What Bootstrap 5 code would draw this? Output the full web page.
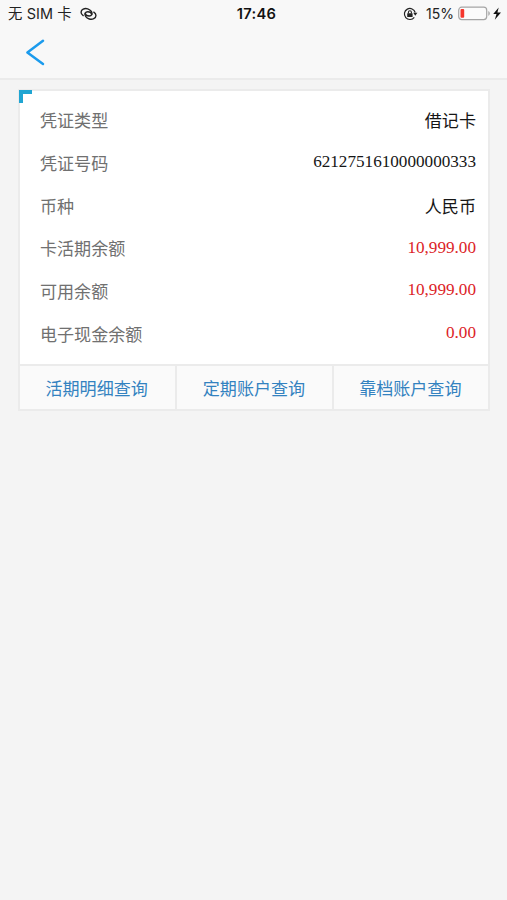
<!DOCTYPE html>
<html lang="zh-CN">
<head>
<meta charset="utf-8">
<meta name="viewport" content="width=device-width, initial-scale=1">
<title>账户余额</title>
<link href="https://cdn.jsdelivr.net/npm/bootstrap@5.3.0/dist/css/bootstrap.min.css" rel="stylesheet">
<style>
body{background:#f4f4f4;font-family:"Liberation Sans","Noto Sans CJK SC",sans-serif;color:#161616;font-size:17.07px;min-height:100vh;overflow:hidden}
.top-area{background:#f8f8f8;border-bottom:2px solid #ebebeb;height:80px}
.status-line{height:28px;font-family:Inter,"Noto Sans CJK SC",sans-serif;font-size:14px;line-height:28px;color:#222;padding:0 5px 0 8px}
.status-line>div{flex:1 1 0}
.status-line svg{flex:none}
.carrier{font-size:14.4px;letter-spacing:.12px}
.clock{font-weight:600;font-size:14.7px;letter-spacing:.25px;color:#111;padding-left:3px}
.back-link{margin:10px 0 0 24px;line-height:0;width:22px}
.account{margin:9px 17px 0 18px;border:2px solid #ebebeb;border-radius:0;background:#fff}
.corner-tab{top:-1px;left:-1px;width:13px;height:13px;border:solid #20a5d2;border-width:4px 0 0 4px}
.detail-list{padding:9.6px 12px 7.4px 20px}
.detail-list>div{height:42.7px}
.detail-list dt{color:#707070;font-weight:400}
.figure-text{font-family:"Liberation Serif",serif;font-size:17.15px;position:relative;top:-2.5px}
.money{color:#dc2327}
.actions{border-top:2px solid #ebebeb;background:#fafafa;height:45px}
.actions a{color:#3382c0;padding:4px 2px 0 0}
.actions a+a{border-left:2px solid #ebebeb;padding-right:1px}
</style>
<script src="https://cdn.jsdelivr.net/npm/bootstrap@5.3.0/dist/js/bootstrap.bundle.min.js"></script>
</head>
<body>
<header class="top-area">
  <div class="status-line d-flex align-items-center">
    <div class="d-flex align-items-center"><span class="carrier">无 SIM 卡</span>
      <svg class="ms-2" width="17" height="14" viewBox="0 0 17 14" fill="none" stroke="#222" stroke-width="1.4" stroke-linecap="round"><path d="M3.2 8.6C.4 6.9.3 3.6 3.2 2.1 6 .7 9.7 1.9 11.4 4.5c1.5 2.4.2 4.5-2.2 4.5-2 0-3.6-1.1-4-2.5"/><path d="M13.8 5.2c2.8 1.7 2.9 5 0 6.5-2.8 1.4-6.5.2-8.2-2.4-1.5-2.4-.2-4.5 2.2-4.5 2 0 3.6 1.1 4 2.5"/></svg>
    </div>
    <span class="clock">17:46</span>
    <div class="d-flex align-items-center justify-content-end">
      <svg class="me-2" width="15" height="14" viewBox="0 0 15 14"><path d="M11.3 10.3A5.5 5.5 0 1 1 12.2 5.5" fill="none" stroke="#222" stroke-width="1.2"/><path d="M10.2 5.8h4.2l-2.1 3z" fill="#222"/><rect x="4.2" y="6.2" width="5.4" height="3.8" rx=".5" fill="#222"/><path d="M5.4 6.5V5.2a1.5 1.5 0 0 1 3 0v1.3" fill="none" stroke="#222" stroke-width="1.1"/></svg>
      <span>15%</span>
      <svg class="ms-1" width="44" height="16" viewBox="0 0 44 16"><rect x=".7" y="1.2" width="28" height="12.4" rx="3" fill="#fbfbfb" stroke="#a5a5a5" stroke-width="1.2"/><rect x="2.5" y="3.1" width="3.7" height="8.7" rx="1" fill="#f5352c"/><path d="M30.3 5c2 .7 2 4.1 0 4.8z" fill="#a5a5a5"/><path d="M40.7 1.4 35.2 8h3.3l-1.7 5.8L43 6.4h-3.6z" fill="#111"/></svg>
    </div>
  </div>
  <a href="#" class="back-link d-block" aria-label="返回"><svg width="22" height="28" viewBox="0 0 22 28"><path d="M19 2.8 3.4 14.5 19 26" fill="none" stroke="#1b9bed" stroke-width="2.5" stroke-linecap="round" stroke-linejoin="round"/></svg></a>
</header>
<main class="account card">
  <span class="corner-tab position-absolute"></span>
  <dl class="detail-list mb-0">
    <div class="d-flex align-items-center justify-content-between"><dt>凭证类型</dt><dd class="mb-0">借记卡</dd></div>
    <div class="d-flex align-items-center justify-content-between"><dt>凭证号码</dt><dd class="mb-0 figure-text">6212751610000000333</dd></div>
    <div class="d-flex align-items-center justify-content-between"><dt>币种</dt><dd class="mb-0">人民币</dd></div>
    <div class="d-flex align-items-center justify-content-between"><dt>卡活期余额</dt><dd class="mb-0 figure-text money">10,999.00</dd></div>
    <div class="d-flex align-items-center justify-content-between"><dt>可用余额</dt><dd class="mb-0 figure-text money">10,999.00</dd></div>
    <div class="d-flex align-items-center justify-content-between"><dt>电子现金余额</dt><dd class="mb-0 figure-text money">0.00</dd></div>
  </dl>
  <nav class="actions row g-0">
    <a href="#" class="col d-flex align-items-center justify-content-center text-decoration-none">活期明细查询</a>
    <a href="#" class="col d-flex align-items-center justify-content-center text-decoration-none">定期账户查询</a>
    <a href="#" class="col d-flex align-items-center justify-content-center text-decoration-none">靠档账户查询</a>
  </nav>
</main>
</body>
</html>
